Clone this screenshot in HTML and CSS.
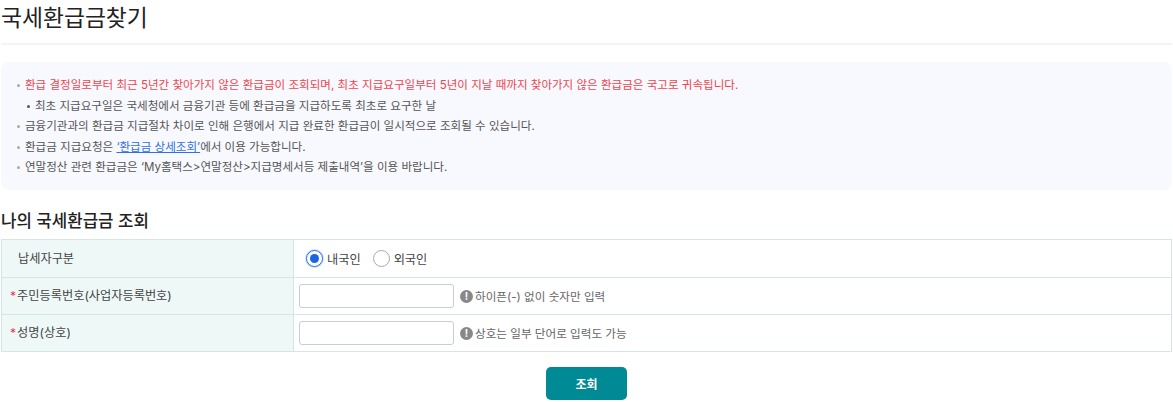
FILE: index.html
```html
<!DOCTYPE html>
<html lang="ko">
<head>
  <meta charset="UTF-8" />
  <title>국세환급금찾기</title>
  <link rel="stylesheet" href="styles.css">
</head>
<body>
  <h1 class="page-title">국세환급금찾기</h1>

  <ul class="notice">
    <li class="notice-red">환급 결정일로부터 최근 5년간 찾아가지 않은 환급금이 조회되며, 최초 지급요구일부터 5년이 지날 때까지 찾아가지 않은 환급금은 국고로 귀속됩니다.</li>
    <li class="notice-sub">최초 지급요구일은 국세청에서 금융기관 등에 환급금을 지급하도록 최초로 요구한 날</li>
    <li>금융기관과의 환급금 지급절차 차이로 인해 은행에서 지급 완료한 환급금이 일시적으로 조회될 수 있습니다.</li>
    <li>환급금 지급요청은 <a href="#">‘환급금 상세조회’</a>에서 이용 가능합니다.</li>
    <li>연말정산 관련 환급금은 ‘My홈택스&gt;연말정산&gt;지급명세서등 제출내역’을 이용 바랍니다.</li>
  </ul>

  <h2 class="section-title">나의 국세환급금 조회</h2>

  <div class="form-table">
    <div class="row row-first">
      <div class="label label-plain">납세자구분</div>
      <div class="field">
        <label class="radio"><span class="radio-dot checked"></span>내국인</label>
        <label class="radio"><span class="radio-dot"></span>외국인</label>
      </div>
    </div>
    <div class="row">
      <div class="label"><span class="req">*</span>주민등록번호(사업자등록번호)</div>
      <div class="field field-input">
        <input type="text" class="text-input" />
        <span class="hint"><span class="hint-icon">!</span>하이픈(-) 없이 숫자만 입력</span>
      </div>
    </div>
    <div class="row">
      <div class="label"><span class="req">*</span>성명(상호)</div>
      <div class="field field-input">
        <input type="text" class="text-input" />
        <span class="hint"><span class="hint-icon">!</span>상호는 일부 단어로 입력도 가능</span>
      </div>
    </div>
  </div>

  <div class="actions">
    <button class="search-btn">조회</button>
  </div>
</body>
</html>
```

FILE: styles.css
```css
body {
  font-family: Inter, "Noto Sans CJK KR", sans-serif;
  margin: 0;
  padding: 0 1px;
  color: #444;
  font-size: 11.55px;
  overflow: hidden;
}

.page-title {
  font-size: 22.8px;
  font-weight: 400;
  color: #222;
  line-height: 30px;
  margin: 0;
  padding: 3px 0 10px;
  border-bottom: 2px solid #f4f4f4;
}

.notice {
  list-style: none;
  margin: 17px 0 0;
  padding: 13px 15px 12px;
  background-color: #f8f9fe;
  border-radius: 8px;
  height: 103px;
}

.notice li {
  line-height: 20.5px;
  padding-left: 9px;
  position: relative;
  color: #555;
}

.notice li::before {
  content: "";
  position: absolute;
  left: 1px;
  top: 9px;
  width: 3px;
  height: 3px;
  border-radius: 50%;
  background-color: #aaa;
}

.notice .notice-red {
  color: #f0444c;
}

.notice .notice-sub {
  padding-left: 19px;
}

.notice .notice-sub::before {
  left: 11px;
  background-color: #555;
}

.notice a {
  color: #2f6fe8;
  text-decoration: underline;
}

.section-title {
  font-size: 16.8px;
  font-weight: 500;
  color: #222;
  line-height: 22px;
  margin: 20px 0 7px;
}

.form-table {
  border: 1px solid #d5e6e6;
}

.row {
  display: flex;
  height: 36px;
  border-bottom: 1px solid #d5e6e6;
}

.row-first {
  height: 37px;
}

.row:last-child {
  border-bottom: none;
}

.label {
  display: flex;
  align-items: center;
  width: 292px;
  background-color: #eef8f7;
  border-right: 1px solid #d5e6e6;
  padding: 0 0 2px 8px;
  font-size: 12.2px;
  color: #444;
  box-sizing: border-box;
}

.label-plain {
  padding-left: 16px;
}

.req {
  color: #e8304a;
  margin-right: 1px;
}

.field {
  display: flex;
  align-items: center;
  padding-left: 12px;
  gap: 12px;
}

.field-input {
  padding-left: 5px;
  gap: 6px;
}

.radio {
  display: flex;
  align-items: center;
  gap: 4px;
  font-size: 12.2px;
}

.radio-dot {
  width: 15px;
  height: 15px;
  border: 1px solid #aaa;
  border-radius: 50%;
  background-color: #fff;
  position: relative;
}

.radio-dot.checked {
  border-color: #2f6fe8;
  box-shadow: 0 0 0 1px #cfdffa;
}

.radio-dot.checked::after {
  content: "";
  position: absolute;
  left: 3px;
  top: 3px;
  width: 9px;
  height: 9px;
  border-radius: 50%;
  background-color: #1a66e0;
}

.text-input {
  width: 155px;
  height: 24px;
  box-sizing: border-box;
  border: 1px solid #ccc;
  border-radius: 3px;
  padding: 0 6px;
  background-color: #fff;
}

.hint {
  display: flex;
  align-items: center;
  gap: 2px;
  font-size: 11.6px;
  color: #666;
}

.hint-icon {
  width: 13px;
  height: 13px;
  border-radius: 50%;
  background-color: #888;
  color: #fff;
  font-size: 10px;
  font-weight: 700;
  line-height: 13px;
  text-align: center;
}

.actions {
  display: flex;
  justify-content: center;
  margin-top: 15px;
}

.search-btn {
  width: 81px;
  height: 33px;
  background-color: #008a96;
  color: #fff;
  border: none;
  border-radius: 5px;
  font-family: inherit;
  font-size: 12px;
  font-weight: 700;
  cursor: pointer;
}
```
